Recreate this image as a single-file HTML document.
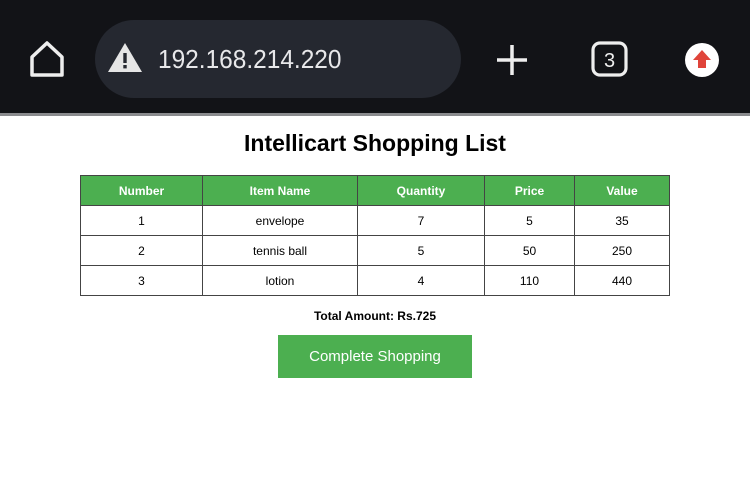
<!DOCTYPE html>
<html><head><style>
*{margin:0;padding:0;box-sizing:border-box}
body{width:750px;height:500px;background:#fff;font-family:"Liberation Sans",sans-serif;position:relative;overflow:hidden}
.bar{position:absolute;left:0;top:0;width:750px;height:113px;background:#121317}
.line{position:absolute;left:0;top:113px;width:750px;height:3px;background:#8a8b8e}
.pill{position:absolute;left:95px;top:20px;width:366px;height:78px;border-radius:39px;background:#252830}
.url{position:absolute;left:158px;top:44px;color:#e8e8ea;font-size:26px;transform:scaleX(0.94);transform-origin:left}
h1{position:absolute;top:130px;left:0;width:750px;text-align:center;font-size:23px;font-weight:bold;color:#000}
table{position:absolute;left:80px;top:175px;border-collapse:collapse;font-size:12px}
td,th{border:1px solid #444;text-align:center;height:30px}
th{background:#4caf50;color:#fff;font-weight:bold}
.total{position:absolute;top:309px;left:0;width:750px;text-align:center;font-size:12px;font-weight:bold}
.btn{position:absolute;left:278px;top:335px;width:194px;height:43px;background:#4caf50;color:#fff;font-size:15px;text-align:center;line-height:43px}
</style></head><body>
<div class="bar"></div><div class="line"></div>
<svg style="position:absolute;left:28px;top:40px" width="38" height="38" viewBox="0 0 38 38"><path d="M4 17 L19 3 L34 17 V35 H4 Z" fill="none" stroke="#eee" stroke-width="3.5" stroke-linejoin="round"/></svg>
<div class="pill"></div>
<svg style="position:absolute;left:107px;top:43px" width="36" height="30" viewBox="0 0 36 30"><path d="M18 0 L35 29 H1 Z" fill="#e6e6e6"/><rect x="16.3" y="10" width="3.4" height="10" fill="#252830"/><rect x="16.3" y="22" width="3.4" height="3.4" fill="#252830"/></svg>
<div class="url">192.168.214.220</div>
<svg style="position:absolute;left:495px;top:43px" width="34" height="34"><path d="M17 2V32M2 17H32" stroke="#eee" stroke-width="3.5"/></svg>
<svg style="position:absolute;left:591px;top:41px" width="38" height="36"><rect x="2" y="2" width="33" height="32" rx="7" fill="none" stroke="#eee" stroke-width="3.2"/><text x="18.5" y="26" text-anchor="middle" fill="#eee" font-family="Liberation Sans" font-size="20">3</text></svg>
<svg style="position:absolute;left:684px;top:42px" width="36" height="36"><circle cx="18" cy="18" r="17" fill="#fff"/><path d="M18 8 L27 18 H22 V26 H14 V18 H9 Z" fill="#e0443a"/></svg>
<h1>Intellicart Shopping List</h1>
<table>
<tr><th style="width:122px">Number</th><th style="width:155px">Item Name</th><th style="width:127px">Quantity</th><th style="width:90px">Price</th><th style="width:95px">Value</th></tr>
<tr><td>1</td><td>envelope</td><td>7</td><td>5</td><td>35</td></tr>
<tr><td>2</td><td>tennis ball</td><td>5</td><td>50</td><td>250</td></tr>
<tr><td>3</td><td>lotion</td><td>4</td><td>110</td><td>440</td></tr>
</table>
<div class="total">Total Amount: Rs.725</div>
<div class="btn">Complete Shopping</div>
</body></html>
